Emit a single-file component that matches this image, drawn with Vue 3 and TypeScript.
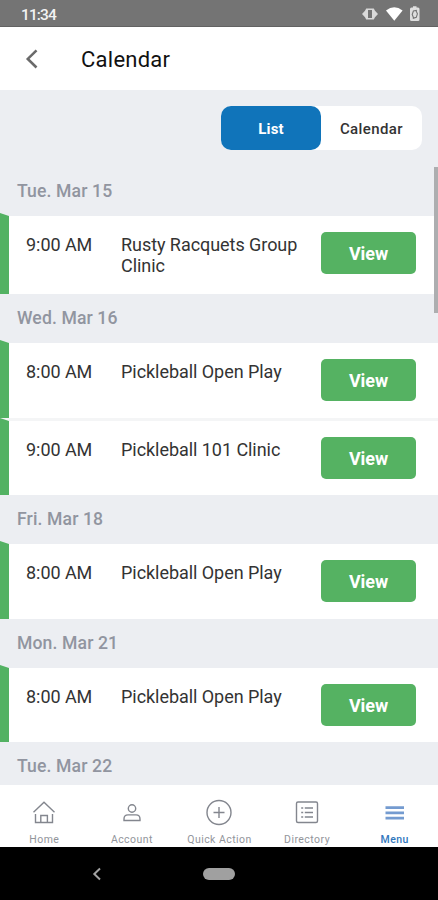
<script setup lang="ts">
interface EventItem {
  time: string
  title: string
  tall?: boolean
}
interface Day {
  label: string
  events: EventItem[]
}

const days: Day[] = [
  { label: 'Tue. Mar 15', events: [{ time: '9:00 AM', title: 'Rusty Racquets Group Clinic', tall: true }] },
  {
    label: 'Wed. Mar 16',
    events: [
      { time: '8:00 AM', title: 'Pickleball Open Play' },
      { time: '9:00 AM', title: 'Pickleball 101 Clinic' },
    ],
  },
  { label: 'Fri. Mar 18', events: [{ time: '8:00 AM', title: 'Pickleball Open Play' }] },
  { label: 'Mon. Mar 21', events: [{ time: '8:00 AM', title: 'Pickleball Open Play' }] },
  { label: 'Tue. Mar 22', events: [] },
]
</script>

<template>
  <div class="screen">
    <div class="status">
      <span class="clock">11:34</span>
      <svg class="status-icons" width="60" height="18" viewBox="0 0 60 18">
        <path d="M1 9l3-3.2 1.200-2.300h7.600L14 5.800 17 9l-3 3.200-1.200 2.300H5.200L4 12.200z" fill="#d9d9d9" />
        <rect x="7" y="5" width="4" height="8" fill="#747474" />
        <path d="M25 5.500Q33.200-1 41.600 5.500L33.300 15.700z" fill="#fff" />
        <path d="M50.500 2.600h1.500V1.200h3.500v1.400H57a1.500 1.500 0 0 1 1.500 1.500v10.400A1.500 1.500 0 0 1 57 16h-6.500a1.500 1.500 0 0 1-1.500-1.500V4.100a1.500 1.500 0 0 1 1.500-1.500z" fill="#dedede" />
        <path d="M56 5.200l-3.600.8-1.200 3.500 1.300 3.300M51.800 13.400l3.500-1 1.100-3.500-1.300-3" fill="none" stroke="#747474" stroke-width="1.100" />
      </svg>
    </div>

    <header class="header">
      <svg class="back" width="14" height="20" viewBox="0 0 14 20">
        <path d="M11.500 1.300L2.800 9.900l8.700 8.600" fill="none" stroke="#6a6a6a" stroke-width="2.600" />
      </svg>
      <h1>Calendar</h1>
    </header>

    <main class="content">
      <div class="toolbar">
        <div class="toggle">
          <button class="tab active">List</button>
          <button class="tab">Calendar</button>
        </div>
      </div>
      <section v-for="day in days" :key="day.label">
        <h2>{{ day.label }}</h2>
        <article v-for="event in day.events" :key="event.time" class="event" :class="{ tall: event.tall }">
          <span class="time">{{ event.time }}</span>
          <span class="title">{{ event.title }}</span>
          <button class="view">View</button>
        </article>
      </section>
      <div class="scrollbar"></div>
    </main>

    <nav class="tabs">
      <a class="item">
        <svg width="28" height="28" viewBox="0 0 28 28">
          <path d="M3.500 13.300L14 3.300l10.500 10M5.500 15v8.500h17V15M10.800 23.500v-7h6.600v7" />
        </svg>
        <span>Home</span>
      </a>
      <a class="item">
        <svg width="28" height="28" viewBox="0 0 28 28">
          <circle cx="14" cy="9.500" r="3.700" />
          <path d="M6 21.500v-1.600q0-4 4-4h8q4 0 4 4v1.600z" />
        </svg>
        <span>Account</span>
      </a>
      <a class="item">
        <svg width="28" height="28" viewBox="0 0 28 28">
          <circle cx="14" cy="13.500" r="12" />
          <path d="M14 8v11M8.500 13.500h11" />
        </svg>
        <span>Quick Action</span>
      </a>
      <a class="item">
        <svg width="28" height="28" viewBox="0 0 28 28">
          <rect x="3.500" y="3" width="21" height="20.500" rx="1.500" />
          <path d="M8.200 9h2M11.800 9H20M8.200 13.500h2M11.800 13.500H20M8.200 18h2M11.800 18H20" />
        </svg>
        <span>Directory</span>
      </a>
      <a class="item selected">
        <svg width="28" height="28" viewBox="0 0 28 28">
          <path d="M4.500 8.700H23M4.500 13.900H23M4.500 19.100H23" />
        </svg>
        <span>Menu</span>
      </a>
    </nav>

    <footer class="system">
      <svg width="10" height="14" viewBox="0 0 10 14">
        <path d="M8 1.500L2.300 7 8 12.500" fill="none" stroke="#a2a2a2" stroke-width="2" />
      </svg>
      <div class="pill"></div>
    </footer>
  </div>
</template>

<style>
body {
  margin: 0;
}
</style>

<style scoped>
.screen {
  width: 438px;
  height: 900px;
  display: flex;
  flex-direction: column;
  overflow: hidden;
  background: #fff;
  font-family: Roboto, "Liberation Sans", sans-serif;
}
.status {
  flex: none;
  box-sizing: border-box;
  height: 27px;
  padding: 0 17px 0 21px;
  display: flex;
  align-items: center;
  justify-content: space-between;
  background: #747474;
  border-bottom: 1px solid #626262;
}
.clock {
  color: #f2f2f2;
  font-size: 15.500px;
  font-weight: 500;
  line-height: 20px;
  letter-spacing: -0.900px;
  padding-top: 3px;
}
.status-icons {
  margin-top: 2px;
}
.header {
  flex: none;
  height: 63px;
  display: flex;
  align-items: center;
  padding-left: 25px;
}
.back {
  margin-right: 42px;
}
h1 {
  margin: 2px 0 0;
  font-size: 22px;
  font-weight: 400;
  letter-spacing: 0.250px;
  color: #111;
}
.content {
  position: relative;
  flex: 1;
  min-height: 0;
  overflow: hidden;
  background: #eceef2;
}
.toolbar {
  height: 61px;
  padding: 16px 16px 0;
  display: flex;
  justify-content: flex-end;
}
.toggle {
  display: flex;
  width: 201px;
  height: 44px;
  border-radius: 10px;
  background: #fff;
}
button {
  font-family: inherit;
  border: 0;
  padding: 0;
  margin: 0;
}
.tab {
  flex: 1;
  border-radius: 10px;
  background: transparent;
  color: #333;
  font-size: 15px;
  font-weight: 500;
  letter-spacing: 0.400px;
  padding-top: 2px;
}
.tab.active {
  flex: 0 0 100px;
  background: #1074ba;
  color: #fff;
  font-weight: 700;
  letter-spacing: 0.200px;
}
h2 {
  box-sizing: border-box;
  height: 46.400px;
  margin: 0;
  padding-left: 17px;
  line-height: 48px;
  font-size: 17.600px;
  font-weight: 500;
  letter-spacing: 0.120px;
  color: #9195a0;
}
.event {
  box-sizing: border-box;
  height: 77.300px;
  display: flex;
  align-items: flex-start;
  border-left: 9.500px solid #53b263;
  border-top: 3px solid #eceef2;
  background: #fff;
  padding: 16px 22px 0 17px;
}
.event + .event {
  border-top-color: #f4f5f6;
}
.event.tall {
  height: 80.700px;
}
.time,
.title {
  font-size: 18px;
  line-height: 21px;
  letter-spacing: -0.050px;
  color: #333;
  padding-top: 2px;
}
.time {
  width: 95px;
}
.title {
  width: 190px;
}
.view {
  flex: none;
  margin-left: auto;
  width: 95px;
  height: 42px;
  border-radius: 5px;
  background: #55b262;
  color: #fff;
  font-size: 18px;
  font-weight: 700;
  letter-spacing: -0.100px;
  padding-top: 1px;
}
.scrollbar {
  position: absolute;
  right: 0;
  top: 77px;
  width: 4px;
  height: 146px;
  background: #adaeb0;
}
.tabs {
  flex: none;
  box-sizing: border-box;
  height: 62px;
  padding-top: 14px;
  padding-left: 0.500px;
  display: grid;
  grid-template-columns: repeat(5, 87.600px);
  background: #fff;
}
.item {
  display: flex;
  flex-direction: column;
  align-items: center;
  color: #92959b;
  font-size: 10.500px;
  line-height: 14px;
  letter-spacing: 0.450px;
  gap: 6px;
}
.item svg {
  fill: none;
  stroke: #83868e;
  stroke-width: 1.400;
}
.item.selected {
  color: #3177bd;
  font-weight: 500;
}
.item.selected svg {
  stroke: #749bd0;
  stroke-width: 2.800;
}
.system {
  flex: none;
  height: 53px;
  display: grid;
  grid-template-columns: 111px 32px;
  align-items: center;
  background: #000;
  padding-left: 92px;
}
.pill {
  width: 32px;
  height: 12px;
  border-radius: 6px;
  background: #a0a0a0;
}
</style>
